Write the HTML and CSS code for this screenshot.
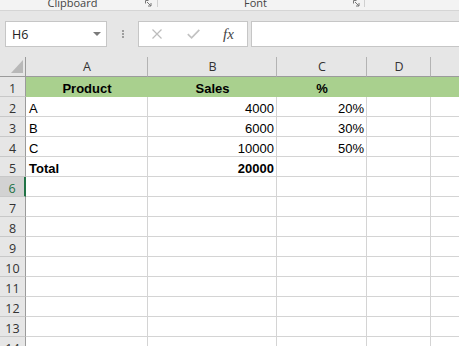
FILE: index.html
```html
<!DOCTYPE html>
<html>
<head>
<meta charset="utf-8">
<link rel="stylesheet" href="styles.css">
</head>
<body>
<div class="app">
  <div class="ribbon">
    <div class="group g1">
      <span class="glabel">Clipboard</span>
      <svg class="launcher" viewBox="0 0 7 7"><path d="M0.5 3.5V0.5H3.5M2 2L6 6M6 3V6H3" fill="none" stroke="#777" stroke-width="1"/></svg>
    </div>
    <div class="group g2">
      <span class="glabel">Font</span>
      <svg class="launcher" viewBox="0 0 7 7"><path d="M0.5 3.5V0.5H3.5M2 2L6 6M6 3V6H3" fill="none" stroke="#777" stroke-width="1"/></svg>
    </div>
  </div>

  <div class="fbar">
    <div class="namebox">
      <span>H6</span>
      <svg class="caret" viewBox="0 0 8 4"><polygon points="0,0 8,0 4,4" fill="#7a7a7a"/></svg>
    </div>
    <div class="grip"><i></i><i></i><i></i></div>
    <div class="fbtns">
      <svg class="xbtn" viewBox="0 0 10 10"><path d="M0.5 0.5L9.5 9.5M9.5 0.5L0.5 9.5" stroke="#bcbcbc" stroke-width="1.2" fill="none"/></svg>
      <svg class="okbtn" viewBox="0 0 13 10"><path d="M0.8 5.2L4.6 8.8L12.3 0.8" stroke="#c2c2c2" stroke-width="1.7" fill="none"/></svg>
      <span class="fx">fx</span>
    </div>
    <div class="finput"></div>
  </div>

  <div class="sheet">
    <div class="row colhead">
      <div class="c corner"><svg class="tri" viewBox="0 0 12 13"><polygon points="12,0 12,13 0,13" fill="#b8b8b8"/></svg></div>
      <div class="c ch">A</div>
      <div class="c ch">B</div>
      <div class="c ch">C</div>
      <div class="c ch">D</div>
      <div class="c ch"></div>
      <div class="c ch"></div>
    </div>

    <div class="row">
      <div class="c rh">1</div>
      <div class="c green b mid">Product</div>
      <div class="c green b mid">Sales</div>
      <div class="c green b mid">%</div>
      <div class="c green"></div>
      <div class="c green"></div>
      <div class="c green"></div>
    </div>
    <div class="row">
      <div class="c rh">2</div>
      <div class="c">A</div>
      <div class="c num">4000</div>
      <div class="c num">20%</div>
      <div class="c"></div><div class="c"></div><div class="c"></div>
    </div>
    <div class="row">
      <div class="c rh">3</div>
      <div class="c">B</div>
      <div class="c num">6000</div>
      <div class="c num">30%</div>
      <div class="c"></div><div class="c"></div><div class="c"></div>
    </div>
    <div class="row">
      <div class="c rh">4</div>
      <div class="c">C</div>
      <div class="c num">10000</div>
      <div class="c num">50%</div>
      <div class="c"></div><div class="c"></div><div class="c"></div>
    </div>
    <div class="row">
      <div class="c rh">5</div>
      <div class="c b">Total</div>
      <div class="c num b">20000</div>
      <div class="c"></div>
      <div class="c"></div><div class="c"></div><div class="c"></div>
    </div>
    <div class="row">
      <div class="c rh sel">6</div>
      <div class="c"></div><div class="c"></div><div class="c"></div><div class="c"></div><div class="c"></div><div class="c"></div>
    </div>
    <div class="row">
      <div class="c rh">7</div>
      <div class="c"></div><div class="c"></div><div class="c"></div><div class="c"></div><div class="c"></div><div class="c"></div>
    </div>
    <div class="row">
      <div class="c rh">8</div>
      <div class="c"></div><div class="c"></div><div class="c"></div><div class="c"></div><div class="c"></div><div class="c"></div>
    </div>
    <div class="row">
      <div class="c rh">9</div>
      <div class="c"></div><div class="c"></div><div class="c"></div><div class="c"></div><div class="c"></div><div class="c"></div>
    </div>
    <div class="row">
      <div class="c rh">10</div>
      <div class="c"></div><div class="c"></div><div class="c"></div><div class="c"></div><div class="c"></div><div class="c"></div>
    </div>
    <div class="row">
      <div class="c rh">11</div>
      <div class="c"></div><div class="c"></div><div class="c"></div><div class="c"></div><div class="c"></div><div class="c"></div>
    </div>
    <div class="row">
      <div class="c rh">12</div>
      <div class="c"></div><div class="c"></div><div class="c"></div><div class="c"></div><div class="c"></div><div class="c"></div>
    </div>
    <div class="row">
      <div class="c rh">13</div>
      <div class="c"></div><div class="c"></div><div class="c"></div><div class="c"></div><div class="c"></div><div class="c"></div>
    </div>
    <div class="row">
      <div class="c rh">14</div>
      <div class="c"></div><div class="c"></div><div class="c"></div><div class="c"></div><div class="c"></div><div class="c"></div>
    </div>
  </div>
</div>
</body>
</html>
```

FILE: styles.css
```css
html, body {
  margin: 0;
  padding: 0;
  background: #ffffff;
}

.app {
  width: 459px;
  height: 346px;
  overflow: hidden;
  font-family: "Liberation Sans", Arial, sans-serif;
}

/* ribbon strip (cut off) */
.ribbon {
  height: 10px;
  border-bottom: 1px solid #d5d5d5;
  background: #f3f3f3;
  display: flex;
  overflow: hidden;
  font-family: "Open Sans", sans-serif;
  font-size: 11px;
  color: #444444;
}

.group {
  display: flex;
  flex: none;
  height: 7px;
  box-sizing: border-box;
  border-right: 1px solid #d0d0d0;
}

.g1 { width: 158px; }
.g2 { width: 207px; }

.glabel {
  flex: 1;
  text-align: center;
  line-height: 11px;
  margin-top: -3px;
  white-space: nowrap;
}

.launcher {
  width: 7px;
  height: 7px;
  flex: none;
  margin-right: 5px;
}

.g2 .launcher { margin-right: 4px; }

/* formula bar */
.fbar {
  height: 46px;
  box-sizing: border-box;
  padding: 10px 0 10px 5px;
  background: #e6e6e6;
  display: flex;
}

.namebox {
  flex: none;
  width: 102px;
  box-sizing: border-box;
  border: 1px solid #c6c6c6;
  background: #ffffff;
  display: flex;
  align-items: center;
  justify-content: space-between;
  padding: 0 5px 0 6px;
  font-family: "Open Sans", sans-serif;
  font-size: 12.5px;
  color: #222222;
}

.caret {
  width: 8px;
  height: 4px;
}

.grip {
  flex: none;
  width: 31px;
  display: flex;
  flex-direction: column;
  align-items: center;
  justify-content: center;
  gap: 1px;
}

.grip i {
  display: block;
  width: 2px;
  height: 2px;
  background: #9e9e9e;
}

.fbtns {
  flex: none;
  width: 110px;
  box-sizing: border-box;
  border: 1px solid #c6c6c6;
  background: #ffffff;
  display: flex;
  align-items: center;
  padding-left: 13px;
}

.xbtn {
  width: 10px;
  height: 10px;
  margin-right: 25px;
}

.okbtn {
  width: 13px;
  height: 10px;
  margin-right: 23px;
}

.fx {
  font-family: "Liberation Serif", serif;
  font-style: italic;
  font-size: 15px;
  color: #444444;
  line-height: 15px;
}

.finput {
  flex: none;
  width: 240px;
  margin-left: 3px;
  box-sizing: border-box;
  border: 1px solid #c6c6c6;
  background: #ffffff;
}

/* grid */
.sheet {
  font-size: 13px;
  color: #000000;
}

.row {
  display: grid;
  grid-template-columns: 26px 122px 129px 90px 64px 64px 64px;
  height: 20px;
}

.c {
  box-sizing: border-box;
  border-right: 1px solid #d4d4d4;
  border-bottom: 1px solid #d4d4d4;
  display: flex;
  align-items: flex-end;
  padding: 0 2px 0 3px;
  line-height: 15px;
  white-space: nowrap;
  overflow: hidden;
}

.num { justify-content: flex-end; }
.mid { justify-content: center; }
.b { font-weight: bold; }

.green {
  background: #a9d08e;
  border-color: #a9d08e;
}

.colhead .c {
  background: #e6e6e6;
  border-right-color: #b3b3b3;
  border-bottom-color: #9b9b9b;
  justify-content: center;
  padding-bottom: 2px;
  font-family: "Open Sans", sans-serif;
  font-size: 12.5px;
  color: #333333;
}

.colhead .corner {
  border-right-color: #9b9b9b;
  justify-content: flex-end;
  padding: 0 2px 3px 0;
}

.tri {
  width: 12px;
  height: 13px;
}

.rh {
  background: #e6e6e6;
  border-right-color: #9b9b9b;
  border-bottom-color: #c8c8c8;
  justify-content: center;
  padding: 0;
  font-family: "Open Sans", sans-serif;
  font-size: 12.5px;
  color: #333333;
}

.rh.sel {
  background: #d2d2d2;
  color: #217346;
  border-right: 2px solid #217346;
}
```
